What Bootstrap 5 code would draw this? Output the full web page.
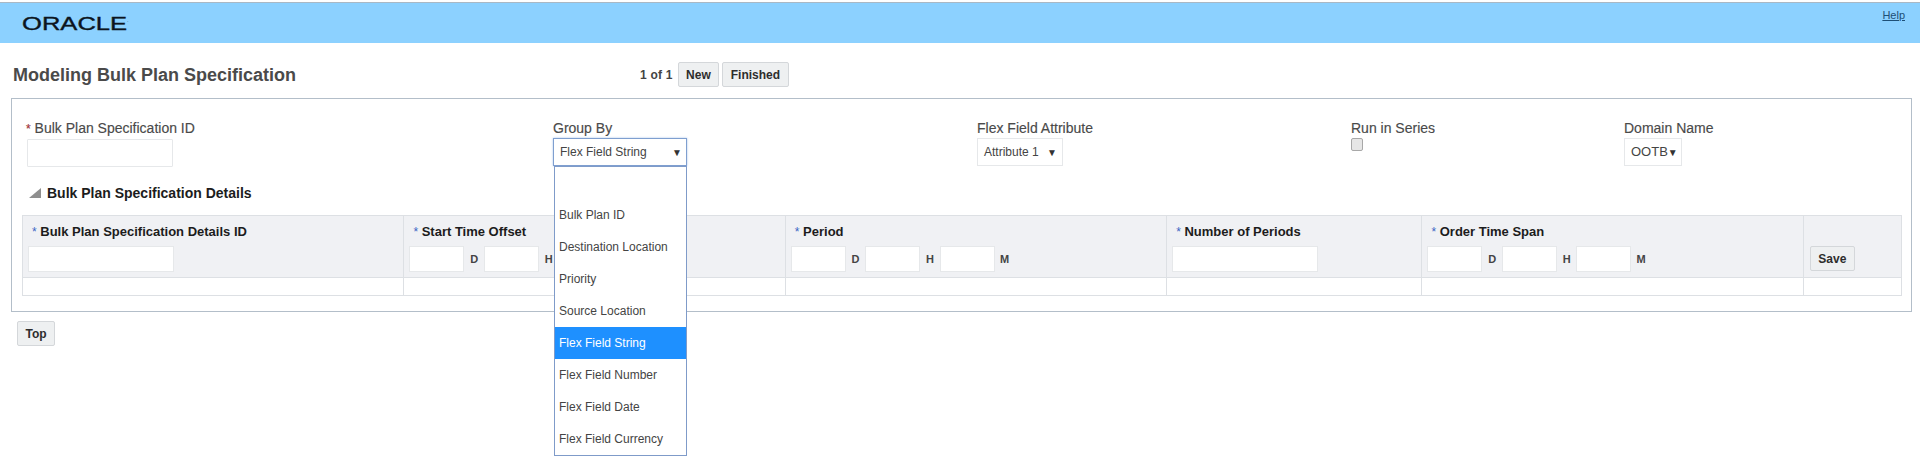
<!DOCTYPE html>
<html lang="en">
<head>
<meta charset="utf-8">
<title>Modeling Bulk Plan Specification</title>
<link href="https://cdn.jsdelivr.net/npm/bootstrap@5.3.0/dist/css/bootstrap.min.css" rel="stylesheet">
<style>
body{font-family:"Liberation Sans",Arial,sans-serif;font-size:12px;color:#444;background:#fff;min-height:472px}
.top-band{margin-top:2px;height:41px;background:#8cd1ff;border-top:1px solid #aab8c4;padding:0 15px 0 22px}
.brand-word{font-family:"Liberation Sans",Arial,sans-serif;font-size:18px;line-height:14px;font-weight:400;color:#0b1420;-webkit-text-stroke:.35px #0b1420;margin-top:14px;transform:scaleX(1.42);transform-origin:left center}
.brand-word sup{font-size:4px;top:-8px;-webkit-text-stroke:0}
.help-link{font-size:11px;color:#1d4f76;margin-top:4px}
.title-row{margin-top:19px;height:25px;padding-left:13px}
.page-title{font-size:18px;font-weight:700;color:#4a4a4a;margin:2px 0 0;width:627px}
.page-count{font-weight:700;font-size:12px;letter-spacing:.2px;color:#444;margin-right:5px}
.act-btn{height:25px;padding:0 7.5px;font-family:inherit;font-size:12px;font-weight:700;color:#2d2d2d;background:#eef0f1;border:1px solid #d4d7da;border-radius:2px;line-height:22px}
.act-btn:hover{background:#e4e6e8;color:#2d2d2d;border-color:#c8cbce}
.gap-three{margin-left:3px}
.form-panel{margin:11px 8px 0 11px;height:214px;border:1px solid #b3bec9;padding:21px 10px 0 10px}
.field-a{width:531px;padding-left:5px}
.field-b{width:424px}
.field-c{width:374px}
.field-d{width:273px}
.field-label{font-size:14px;line-height:16px;color:#4a4a4a;-webkit-text-stroke:.15px #4a4a4a;display:block;margin-bottom:2px;white-space:nowrap}
.req-red{color:#c8242b;font-size:12px}
.req-blue{color:#3c66c4;font-size:12px;font-weight:400}
.field-a .field-label{margin-left:-1px}
.text-box{display:block;height:28px;width:146px;border:1px solid #e6e8ea;background:#fff;border-radius:1px;padding:0 5px;outline:0}
.pick-box{height:28px;border:1px solid #e6e8ea;padding:0 6px;font-size:12px;color:#444;background:#fff;display:inline-flex;align-items:center;justify-content:space-between;white-space:nowrap}
.pick-box i{font-style:normal;font-size:10px;color:#333}
.pick-open{width:134px;border-color:#7f9fd0;box-shadow:0 0 2px #a9c4ea;padding-right:4px}
.pick-attr{width:86px;padding-right:5px}
.pick-domain{width:58px;font-size:13px}
.pick-wrap{position:relative;width:134px}
.list-open{display:block;position:absolute;left:1px;top:28px;width:133px;min-width:0;margin:0;padding:0;background:#fff;border:1px solid #7f9bc9;border-radius:0;z-index:10;font-size:12px}
.list-open .dropdown-item{height:32px;line-height:32px;padding:0 4px;color:#444;font-size:12px}
.list-open .dropdown-item.active{background:#1e90ff;color:#fff}
.series-check{display:block;width:12px;height:13px;margin:0;border:1px solid #a8a8a8;border-radius:2px;background:#e6e6e6;appearance:none}
.detail-head{margin:18px 0 0 7px;height:16px}
.fold-mark{width:12px;height:10px;margin:3px 6px 0 0;flex:none}
.detail-title{font-size:14px;line-height:16px;font-weight:700;color:#1c1c1c;margin:0}
.spec-grid{margin:14px 0 0 0;width:1880px;table-layout:fixed;border-collapse:collapse;--bs-table-bg:transparent}
.spec-grid th,.spec-grid td{border:1px solid #dde0e4;padding:8px 5px 4px 5px;vertical-align:top;font-weight:400}
.spec-grid thead th{background:#f0f1f4;height:62px}
.spec-grid tbody td{height:18px;padding:0}
.w-wide{width:381px}.w-num{width:255px}.w-save{width:98px}
.col-label{display:block;font-size:13px;line-height:16px;font-weight:700;color:#1c1c1c;padding-left:4px;margin-bottom:6px;white-space:nowrap}
.grid-input{display:block;height:26px;width:146px;border:1px solid #e6e8ea;background:#fff;outline:0;padding:0 4px}
.span-input{width:55px;flex:none}
.unit-tag{font-size:11px;font-weight:700;color:#444;width:19.5px;text-align:center;flex:none;line-height:26px}
.save-cell{padding-top:30px!important;padding-left:6px!important}
.top-row{margin:9px 0 0 17px}
</style>
</head>
<body>
<header class="top-band d-flex justify-content-between align-items-start">
  <div class="brand-word">ORACLE<sup>.</sup></div>
  <a class="help-link" href="#">Help</a>
</header>

<div class="title-row d-flex align-items-center">
  <h1 class="page-title">Modeling Bulk Plan Specification</h1>
  <span class="page-count">1 of 1</span>
  <button type="button" class="btn act-btn">New</button>
  <button type="button" class="btn act-btn gap-three">Finished</button>
</div>

<section class="form-panel">
  <div class="d-flex">
    <div class="field-a">
      <label class="field-label"><span class="req-red">*</span> Bulk Plan Specification ID</label>
      <input class="text-box" type="text" aria-label="Bulk Plan Specification ID">
    </div>
    <div class="field-b">
      <span class="field-label">Group By</span>
      <div class="pick-wrap">
        <div class="pick-box pick-open">Flex Field String <i>▼</i></div>
        <ul class="dropdown-menu list-open list-unstyled">
          <li><a class="dropdown-item" href="#">&nbsp;</a></li>
          <li><a class="dropdown-item" href="#">Bulk Plan ID</a></li>
          <li><a class="dropdown-item" href="#">Destination Location</a></li>
          <li><a class="dropdown-item" href="#">Priority</a></li>
          <li><a class="dropdown-item" href="#">Source Location</a></li>
          <li><a class="dropdown-item active" href="#">Flex Field String</a></li>
          <li><a class="dropdown-item" href="#">Flex Field Number</a></li>
          <li><a class="dropdown-item" href="#">Flex Field Date</a></li>
          <li><a class="dropdown-item" href="#">Flex Field Currency</a></li>
        </ul>
      </div>
    </div>
    <div class="field-c">
      <span class="field-label">Flex Field Attribute</span>
      <div class="pick-box pick-attr">Attribute 1 <i>▼</i></div>
    </div>
    <div class="field-d">
      <span class="field-label">Run in Series</span>
      <input class="series-check" type="checkbox" aria-label="Run in Series">
    </div>
    <div>
      <span class="field-label">Domain Name</span>
      <div class="pick-box pick-domain">OOTB <i>▼</i></div>
    </div>
  </div>

  <div class="detail-head d-flex">
    <svg class="fold-mark" viewBox="0 0 12 10" aria-hidden="true"><polygon points="12,0 12,10 0,10" fill="#8f8f8f"/></svg>
    <h2 class="detail-title">Bulk Plan Specification Details</h2>
  </div>

  <table class="table spec-grid mb-0">
    <colgroup>
      <col class="w-wide"><col class="w-wide"><col class="w-wide"><col class="w-num"><col class="w-wide"><col class="w-save">
    </colgroup>
    <thead>
      <tr>
        <th><span class="col-label"><span class="req-blue">*</span> Bulk Plan Specification Details ID</span><input class="grid-input" type="text" aria-label="Details ID"></th>
        <th><span class="col-label"><span class="req-blue">*</span> Start Time Offset</span>
          <div class="d-flex"><input class="grid-input span-input" type="text" aria-label="Days"><span class="unit-tag">D</span><input class="grid-input span-input" type="text" aria-label="Hours"><span class="unit-tag">H</span><input class="grid-input span-input" type="text" aria-label="Minutes"><span class="unit-tag">M</span></div></th>
        <th><span class="col-label"><span class="req-blue">*</span> Period</span>
          <div class="d-flex"><input class="grid-input span-input" type="text" aria-label="Days"><span class="unit-tag">D</span><input class="grid-input span-input" type="text" aria-label="Hours"><span class="unit-tag">H</span><input class="grid-input span-input" type="text" aria-label="Minutes"><span class="unit-tag">M</span></div></th>
        <th><span class="col-label"><span class="req-blue">*</span> Number of Periods</span><input class="grid-input" type="text" aria-label="Number of Periods"></th>
        <th><span class="col-label"><span class="req-blue">*</span> Order Time Span</span>
          <div class="d-flex"><input class="grid-input span-input" type="text" aria-label="Days"><span class="unit-tag">D</span><input class="grid-input span-input" type="text" aria-label="Hours"><span class="unit-tag">H</span><input class="grid-input span-input" type="text" aria-label="Minutes"><span class="unit-tag">M</span></div></th>
        <th class="save-cell"><button type="button" class="btn act-btn">Save</button></th>
      </tr>
    </thead>
    <tbody>
      <tr><td></td><td></td><td></td><td></td><td></td><td></td></tr>
    </tbody>
  </table>
</section>

<div class="top-row"><button type="button" class="btn act-btn">Top</button></div>
<script src="https://cdn.jsdelivr.net/npm/bootstrap@5.3.0/dist/js/bootstrap.bundle.min.js"></script>
</body>
</html>
